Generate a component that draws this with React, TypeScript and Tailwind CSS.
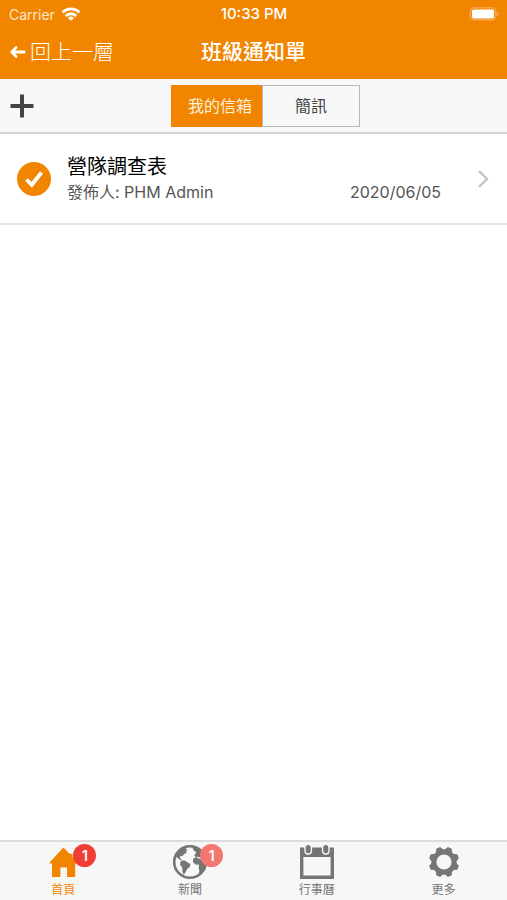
import React, { useState } from "react";

function WifiIcon() {
  return (
    <svg viewBox="0 0 20 14" className="h-[14px] w-5" aria-hidden="true">
      <g fill="none" stroke="#fff" strokeWidth="2.8">
        <path d="M1.6 5.4A12 12 0 0 1 18.4 5.4" />
        <path d="M4.7 8.9A7.6 7.6 0 0 1 15.3 8.9" />
      </g>
      <path d="M10 13.8 7 10.9A4.3 4.3 0 0 1 13 10.9Z" fill="#fff" />
    </svg>
  );
}

function BatteryIcon() {
  return (
    <svg viewBox="0 0 30 14" className="h-[14px] w-[30px]" aria-hidden="true">
      <rect x="1.4" y="0.9" width="25.4" height="12" rx="3.6" fill="none" stroke="#f7ab5c" strokeWidth="1.4" />
      <rect x="3" y="2.4" width="22" height="9" rx="1.6" fill="#fff" />
      <path d="M28.2 4.8Q30 5.5 30 7T28.2 9.2Z" fill="#f7ab5c" />
    </svg>
  );
}

function BackArrow() {
  return (
    <svg viewBox="0 0 16 12" className="h-3 w-4" aria-hidden="true">
      <path d="M6 1.6 1.8 6l4.2 4.4M2.2 6h12" fill="none" stroke="#fff" strokeWidth="2.8" strokeLinecap="round" strokeLinejoin="round" />
    </svg>
  );
}

function HomeIcon() {
  return (
    <svg viewBox="0 0 36 36" className="size-9" aria-hidden="true">
      <path d="M18.4 3.5 24.6 9.8H27.4V12.8L32 18.8V19.4H30.2V33H22V23.4H15.4V33H7V19.4H4.6V18.6Z" fill="currentColor" />
    </svg>
  );
}

function GlobeIcon() {
  return (
    <svg viewBox="0 0 36 36" className="size-9" aria-hidden="true">
      <circle cx="18" cy="18" r="15.8" fill="none" stroke="currentColor" strokeWidth="2.6" />
      <g fill="currentColor">
        <path d="M3.4 12C5.5 6.5 10 3 16 2.4L13.6 4.9 15.6 6 13.8 7.4 14.8 9 12.4 9.8 10.6 12 8.4 11.8 7.8 13.8 9.8 15.6 8.4 16 5.6 14Z" />
        <path d="M8.8 16.8 12.6 16.4 15.6 18.4 18.6 20 17.6 23 15.2 25 13.4 28.4 11.8 30.8 10.4 27.4 10.2 23.6 8 20.4Z" />
        <path d="M20.2 3.2 26 4.4 31.5 9.2 34 15.5 33.8 22 30.6 27.8 26.6 31 27.4 27 26.6 23.8 27.2 20.8 23.4 20.4 20.8 17.8 21.4 14.6 24 13 22.2 11.4 24.4 8.6 21.8 6.6Z" />
      </g>
      <path d="M24.8 13.4 30.4 14.6" stroke="#f7f7f7" strokeWidth="1.2" />
    </svg>
  );
}

function CalendarIcon() {
  return (
    <svg viewBox="0 0 36 36" className="size-9" aria-hidden="true">
      <path fillRule="evenodd" d="M1 3.6H35V35H1ZM4.4 13V31.6H31.6V13Z" fill="currentColor" />
      <g fill="currentColor" stroke="#f7f7f7" strokeWidth="1.4">
        <rect x="6" y="0.4" width="6.4" height="9.6" rx="3.2" />
        <rect x="23.6" y="0.4" width="6.4" height="9.6" rx="3.2" />
      </g>
    </svg>
  );
}

function gearOutline() {
  const point = (radius: number, degrees: number) => {
    const a = (degrees * Math.PI) / 180;
    return `${(18 + radius * Math.cos(a)).toFixed(2)} ${(18 + radius * Math.sin(a)).toFixed(2)}`;
  };
  let d = "";
  for (let i = 0; i < 8; i++) {
    const a = 22.5 + i * 45;
    d += `${i === 0 ? "M" : "L"}${point(15.4, a - 8)}L${point(15.4, a + 8)}Q${point(10, a + 22.5)} ${point(15.4, a + 37)}`;
  }
  return d + "Z";
}

function GearIcon() {
  return (
    <svg viewBox="0 0 36 36" className="size-9" aria-hidden="true">
      <path fillRule="evenodd" d={`${gearOutline()}M18 10.4a7.6 7.6 0 1 0 0 15.2 7.6 7.6 0 1 0 0-15.2Z`} fill="currentColor" />
    </svg>
  );
}

const tabs = [
  { label: "首頁", icon: HomeIcon, badge: 1, active: true },
  { label: "新聞", icon: GlobeIcon, badge: 1, active: false },
  { label: "行事曆", icon: CalendarIcon, badge: 0, active: false },
  { label: "更多", icon: GearIcon, badge: 0, active: false },
];

export default function App() {
  const [box, setBox] = useState<"mail" | "sms">("mail");
  return (
    <div className="flex min-h-screen flex-col bg-white font-[Inter,'Noto_Sans_CJK_TC',sans-serif] text-[#555]">
      <header className="bg-[#f28500] text-white">
        <div className="grid h-7 grid-cols-3 items-center pr-2 pl-[9px]">
          <div className="flex items-center gap-[6px]">
            <span className="text-[14px] text-[#fde5cb]">Carrier</span>
            <WifiIcon />
          </div>
          <span className="text-center text-[15px] font-medium">10:33 PM</span>
          <div className="flex justify-end">
            <BatteryIcon />
          </div>
        </div>
        <div className="grid h-[51px] grid-cols-[1fr_auto_1fr] items-center px-[10px] pb-[3px]">
          <button type="button" className="flex items-center gap-1 text-[21px] leading-7 font-light">
            <BackArrow />
            回上一層
          </button>
          <h1 className="text-[21px] leading-7 font-medium">班級通知單</h1>
        </div>
      </header>

      <div className="flex h-[55px] items-center border-b-2 border-[#d4d4d4] bg-[#f8f8f8] px-[10px]">
        <button type="button" aria-label="新增" className="text-[#444]">
          <svg viewBox="0 0 24 24" className="size-6" aria-hidden="true">
            <path d="M12 0.5V23.5M0.5 12H23.5" stroke="currentColor" strokeWidth="4" />
          </svg>
        </button>
        <div className="mx-auto flex h-[42px] border border-[#b8b8b8] text-[16px]">
          <button
            type="button"
            aria-pressed={box === "mail"}
            onClick={() => setBox("mail")}
            className={`-my-px -ml-px pr-[10px] pl-[17px] ${box === "mail" ? "bg-[#f28500] text-[#fff0dd]" : "text-[#444]"}`}
          >
            我的信箱
          </button>
          <button
            type="button"
            aria-pressed={box === "sms"}
            onClick={() => setBox("sms")}
            className={`border-l border-[#b8b8b8] px-8 ${box === "sms" ? "bg-[#f28500] text-[#fff0dd]" : "text-[#444]"}`}
          >
            簡訊
          </button>
        </div>
      </div>

      <main className="flex-1">
        <ul>
          <li className="border-b-2 border-[#e6e6e6]">
            <a href="#survey" className="flex h-[89px] items-center pr-[18px] pl-[17px]">
              <svg viewBox="0 0 34 34" className="size-[34px] shrink-0" aria-hidden="true">
                <circle cx="17" cy="17" r="17" fill="#f28500" />
                <path d="M9.5 17.5 14.8 22.8 24.5 10.5" fill="none" stroke="#fff" strokeWidth="3.8" />
              </svg>
              <div className="ml-4 flex-1">
                <h2 className="text-[20px] leading-[26px] text-black">營隊調查表</h2>
                <div className="flex justify-between text-[16px] leading-6">
                  <span>發佈人: PHM Admin</span>
                  <time dateTime="2020-06-05">2020/06/05</time>
                </div>
              </div>
              <svg viewBox="0 0 12 20" className="ml-9 h-5 w-3 shrink-0" aria-hidden="true">
                <path d="M2 2 10 10 2 18" fill="none" stroke="#c4c4c4" strokeWidth="2.4" />
              </svg>
            </a>
          </li>
        </ul>
      </main>

      <nav className="grid h-[60px] grid-cols-4 border-t-2 border-[#dcdcdc] bg-[#f7f7f7]">
        {tabs.map(({ label, icon: Icon, badge, active }) => (
          <a
            key={label}
            href={`#${label}`}
            className={`flex flex-col items-center pt-[2px] text-[12px] leading-5 ${active ? "text-[#f28500]" : "text-[#757575]"}`}
          >
            <span className="relative">
              <Icon />
              {badge > 0 && (
                <span
                  className={`absolute top-0 -right-[15px] flex size-[23px] items-center justify-center rounded-full text-[14px] font-semibold text-white ${active ? "bg-[#ee3e36]" : "bg-[#f27770]"}`}
                >
                  {badge}
                </span>
              )}
            </span>
            {label}
          </a>
        ))}
      </nav>
    </div>
  );
}
